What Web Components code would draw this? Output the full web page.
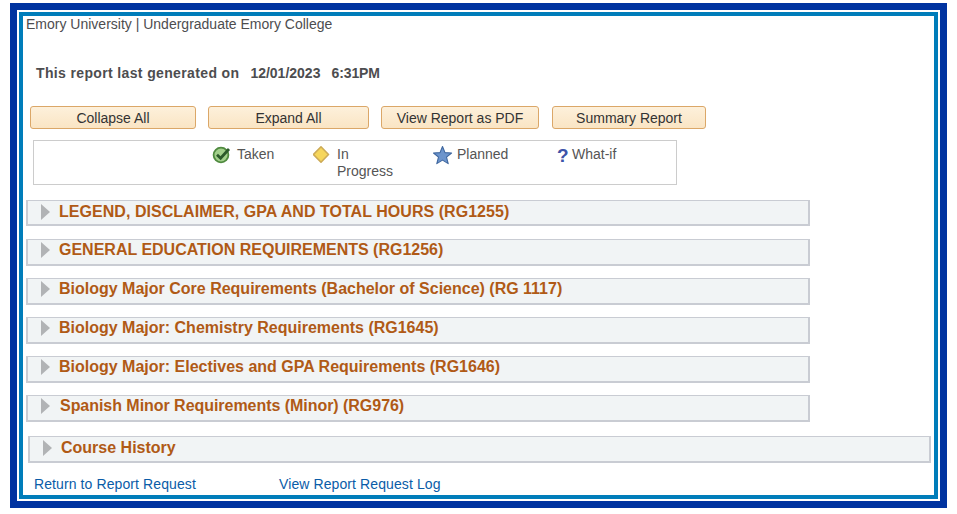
<!DOCTYPE html>
<html>
<head>
<meta charset="utf-8">
<title>Academic Report</title>
<style>
  html, body { margin: 0; padding: 0; background: #fff; }
  body { font-family: "Liberation Sans", Arial, sans-serif; color: #4d4d4f; }
</style>
</head>
<body>

<template id="report-frame-tpl">
  <style>
    :host { display: block; width: 937px; height: 505px; margin: 3px 0 0 10px; box-sizing: border-box; border: 7px solid #0033a0; padding: 2px; background: #fff; }
    .inner { box-sizing: border-box; height: 100%; border: 4px solid #007dba; padding: 0 3px; background: #fff; }
  </style>
  <div class="inner"><slot></slot></div>
</template>

<template id="report-button-tpl">
  <style>
    :host { display: block; box-sizing: border-box; height: 23px; border: 1px solid #dba768; border-radius: 3px; background: linear-gradient(#fdf0db, #fae5c4); color: #333; font-size: 14px; line-height: 23px; text-align: center; }
  </style>
  <slot></slot>
</template>

<template id="legend-item-tpl">
  <style>
    :host { display: flex; align-items: flex-start; font-size: 14px; line-height: 17px; color: #555; }
    .icon { flex: none; height: 19px; display: flex; align-items: center; margin-top: -1px; }
    .label { display: block; }
  </style>
  <span class="icon"><slot name="icon"></slot></span>
  <span class="label"><slot></slot></span>
</template>

<template id="report-section-tpl">
  <style>
    :host { display: flex; align-items: center; box-sizing: border-box; width: 784px; height: 27px; border: 2px solid #c9ccd3; border-top-width: 1px; background: #f1f4f5; color: #b05a16; font-size: 16px; font-weight: bold; padding: 0 0 5px 13px; margin-bottom: 12px; }
    .arrow { flex: none; width: 0; height: 0; border-style: solid; border-width: 8px 0 8px 9px; border-color: transparent transparent transparent #b1b3b5; margin-right: 9px; }
  </style>
  <span class="arrow"></span><slot></slot>
</template>

<report-frame>
  <report-header></report-header>
  <report-toolbar>
    <report-button style="width:166px">Collapse All</report-button>
    <report-button style="width:161px">Expand All</report-button>
    <report-button style="width:158px">View Report as PDF</report-button>
    <report-button style="width:154px;margin-left:1px">Summary Report</report-button>
  </report-toolbar>
  <report-legend>
    <legend-item>
      <svg slot="icon" width="19" height="19" viewBox="0 0 19 19" style="margin:0 6px 0 -1px">
        <circle cx="9" cy="10" r="7.4" fill="#a3d08c" stroke="#4f8a3f" stroke-width="1.8"/>
        <path d="M5 9.8 8.6 13.2 17 4" fill="none" stroke="#2c5a2a" stroke-width="2.8"/>
      </svg>
      Taken
    </legend-item>
    <legend-item>
      <svg slot="icon" width="24" height="19" viewBox="0 0 24 19">
        <path d="M8 1.8 15.5 9.5 8 17.2 0.5 9.5Z" fill="#f6d65c" stroke="#cdab57" stroke-width="1.6" stroke-linejoin="round"/>
      </svg>
      <span style="display:block;width:60px">In Progress</span>
    </legend-item>
    <legend-item>
      <svg slot="icon" width="24" height="20" viewBox="0 0 24 20">
        <path d="M9.5 1.5 12 7.6 18.6 8 13.5 12.2 15.2 18.6 9.5 15.1 3.8 18.6 5.5 12.2 0.5 8 7 7.6Z" fill="#6c94cc" stroke="#3f679f" stroke-width="1.1" stroke-linejoin="round"/>
      </svg>
      Planned
    </legend-item>
    <legend-item>
      <span slot="icon" style="display:block;width:15px;font-size:19px;line-height:19px;font-weight:bold;color:#3d53a8;padding-top:2px">?</span>
      What-if
    </legend-item>
  </report-legend>
  <report-section style="height:26px;margin-bottom:13px;padding-bottom:2px;letter-spacing:.04px">LEGEND, DISCLAIMER, GPA AND TOTAL HOURS (RG1255)</report-section>
  <report-section>GENERAL EDUCATION REQUIREMENTS (RG1256)</report-section>
  <report-section>Biology Major Core Requirements (Bachelor of Science) (RG 1117)</report-section>
  <report-section>Biology Major: Chemistry Requirements (RG1645)</report-section>
  <report-section>Biology Major: Electives and GPA Requirements (RG1646)</report-section>
  <report-section style="margin-bottom:14px;letter-spacing:-.04px"><span style="margin-left:1px">Spanish Minor Requirements (Minor) (RG976)</span></report-section>
  <report-section style="width:903px;margin-left:2px;padding-bottom:3px">Course History</report-section>
  <report-links>
    <a>Return to Report Request</a>
    <a>View Report Request Log</a>
  </report-links>
</report-frame>

<script>
  // plain elements: clone the template into an open shadow root
  class TemplateElement extends HTMLElement {
    constructor(tplId) {
      super();
      this.attachShadow({ mode: 'open' });
      this.shadowRoot.appendChild(document.getElementById(tplId).content.cloneNode(true));
    }
  }

  customElements.define('report-frame', class extends TemplateElement {
    constructor() { super('report-frame-tpl'); }
  });
  customElements.define('report-button', class extends TemplateElement {
    constructor() { super('report-button-tpl'); }
  });
  customElements.define('legend-item', class extends TemplateElement {
    constructor() { super('legend-item-tpl'); }
  });
  customElements.define('report-section', class extends TemplateElement {
    constructor() { super('report-section-tpl'); }
  });

  class ReportHeader extends HTMLElement {
    constructor() {
      super();
      this.attachShadow({ mode: 'open' });
    }
    connectedCallback() {
      this.shadowRoot.innerHTML = `
        <style>
          :host { display: block; color: #4d4d4f; }
          .org { font-size: 14px; line-height: 17px; margin-top: 0; }
          .generated { display: flex; font-size: 14px; font-weight: bold; line-height: 16px; padding: 32px 0 0 10px; }
          .label { letter-spacing: .36px; margin-right: 11px; }
          .date { margin-right: 11px; }
          .time { letter-spacing: -.1px; }
        </style>
        <div class="org">Emory University | Undergraduate Emory College</div>
        <div class="generated">
          <span class="label">This report last generated on</span>
          <span class="date">12/01/2023</span>
          <span class="time">6:31PM</span>
        </div>
      `;
    }
  }
  customElements.define('report-header', ReportHeader);

  class ReportToolbar extends HTMLElement {
    constructor() {
      super();
      this.attachShadow({ mode: 'open' });
      this.shadowRoot.innerHTML = `
        <style>
          :host { display: flex; gap: 12px; padding: 25px 0 0 4px; }
        </style>
        <slot></slot>
      `;
    }
  }
  customElements.define('report-toolbar', ReportToolbar);

  class ReportLegend extends HTMLElement {
    constructor() {
      super();
      this.attachShadow({ mode: 'open' });
      this.shadowRoot.innerHTML = `
        <style>
          :host { display: grid; grid-template-columns: 100px 120px 124px 1fr; box-sizing: border-box; width: 644px; height: 45px; margin: 11px 0 15px 7px; border: 1px solid #ccc; padding: 5px 0 0 179px; }
        </style>
        <slot></slot>
      `;
    }
  }
  customElements.define('report-legend', ReportLegend);

  class ReportLinks extends HTMLElement {
    constructor() {
      super();
      this.attachShadow({ mode: 'open' });
      this.shadowRoot.innerHTML = `
        <style>
          :host { display: grid; grid-template-columns: 245px 1fr; padding: 1px 0 0 8px; font-size: 14px; line-height: 17px; letter-spacing: .1px; color: #0a5ca8; }
          ::slotted(a) { color: inherit; text-decoration: none; }
        </style>
        <slot></slot>
      `;
    }
  }
  customElements.define('report-links', ReportLinks);
</script>
</body>
</html>
